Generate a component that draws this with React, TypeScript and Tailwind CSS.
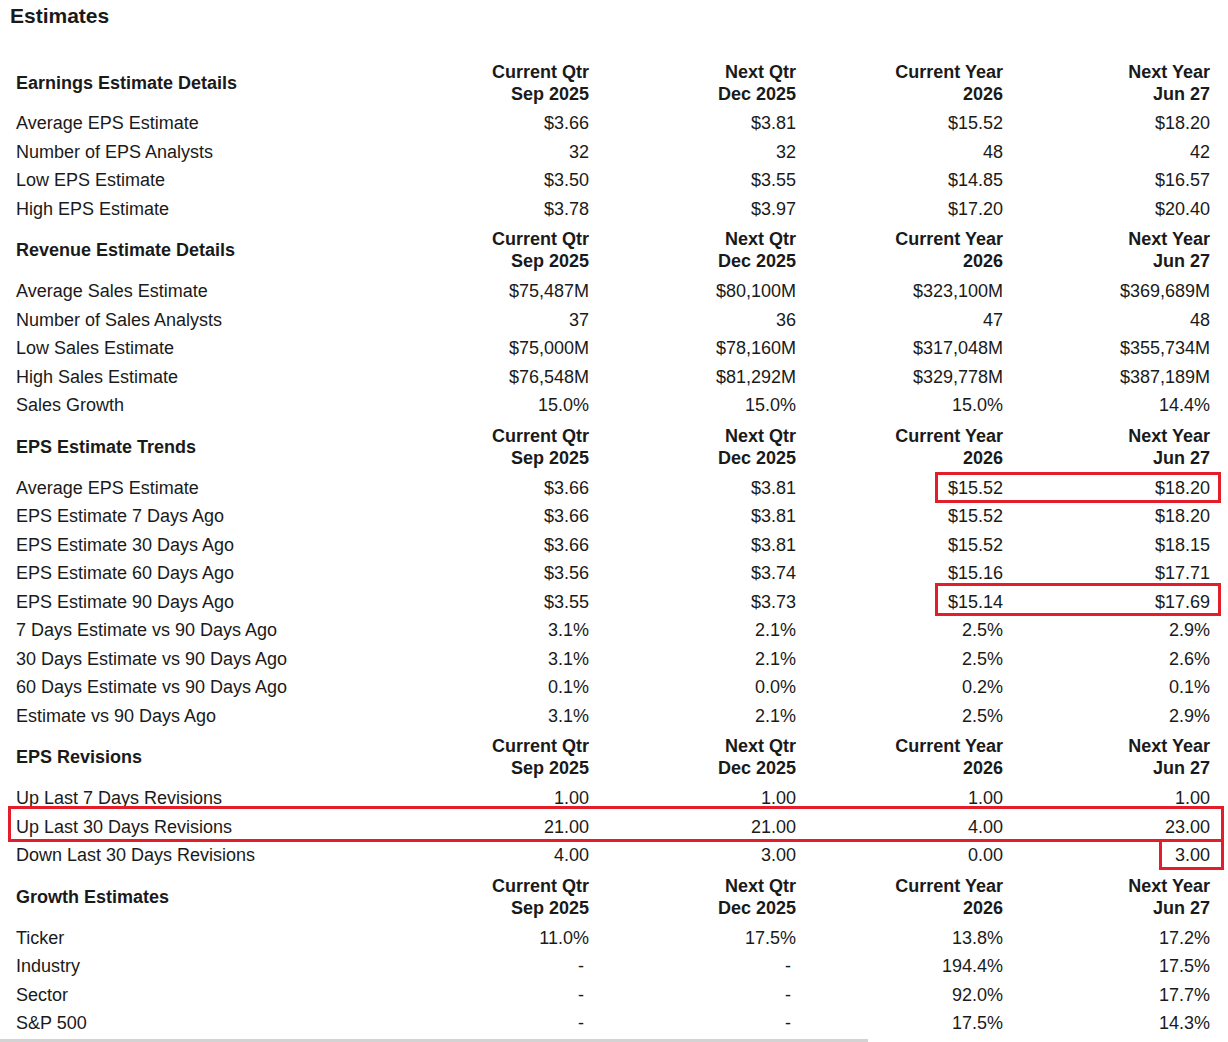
import React from 'react';

type Section = {
  title: string;
  rows: [string, string, string, string, string][];
};

const periods = [
  ['Current Qtr', 'Sep 2025'],
  ['Next Qtr', 'Dec 2025'],
  ['Current Year', '2026'],
  ['Next Year', 'Jun 27'],
];

// empty values show as a dash with a trailing nbsp, as on the source page
const NA = '-\u00a0';

const sections: Section[] = [
  {
    title: 'Earnings Estimate Details',
    rows: [
      ['Average EPS Estimate', '$3.66', '$3.81', '$15.52', '$18.20'],
      ['Number of EPS Analysts', '32', '32', '48', '42'],
      ['Low EPS Estimate', '$3.50', '$3.55', '$14.85', '$16.57'],
      ['High EPS Estimate', '$3.78', '$3.97', '$17.20', '$20.40'],
    ],
  },
  {
    title: 'Revenue Estimate Details',
    rows: [
      ['Average Sales Estimate', '$75,487M', '$80,100M', '$323,100M', '$369,689M'],
      ['Number of Sales Analysts', '37', '36', '47', '48'],
      ['Low Sales Estimate', '$75,000M', '$78,160M', '$317,048M', '$355,734M'],
      ['High Sales Estimate', '$76,548M', '$81,292M', '$329,778M', '$387,189M'],
      ['Sales Growth', '15.0%', '15.0%', '15.0%', '14.4%'],
    ],
  },
  {
    title: 'EPS Estimate Trends',
    rows: [
      ['Average EPS Estimate', '$3.66', '$3.81', '$15.52', '$18.20'],
      ['EPS Estimate 7 Days Ago', '$3.66', '$3.81', '$15.52', '$18.20'],
      ['EPS Estimate 30 Days Ago', '$3.66', '$3.81', '$15.52', '$18.15'],
      ['EPS Estimate 60 Days Ago', '$3.56', '$3.74', '$15.16', '$17.71'],
      ['EPS Estimate 90 Days Ago', '$3.55', '$3.73', '$15.14', '$17.69'],
      ['7 Days Estimate vs 90 Days Ago', '3.1%', '2.1%', '2.5%', '2.9%'],
      ['30 Days Estimate vs 90 Days Ago', '3.1%', '2.1%', '2.5%', '2.6%'],
      ['60 Days Estimate vs 90 Days Ago', '0.1%', '0.0%', '0.2%', '0.1%'],
      ['Estimate vs 90 Days Ago', '3.1%', '2.1%', '2.5%', '2.9%'],
    ],
  },
  {
    title: 'EPS Revisions',
    rows: [
      ['Up Last 7 Days Revisions', '1.00', '1.00', '1.00', '1.00'],
      ['Up Last 30 Days Revisions', '21.00', '21.00', '4.00', '23.00'],
      ['Down Last 30 Days Revisions', '4.00', '3.00', '0.00', '3.00'],
    ],
  },
  {
    title: 'Growth Estimates',
    rows: [
      ['Ticker', '11.0%', '17.5%', '13.8%', '17.2%'],
      ['Industry', NA, NA, '194.4%', '17.5%'],
      ['Sector', NA, NA, '92.0%', '17.7%'],
      ['S&P 500', NA, NA, '17.5%', '14.3%'],
    ],
  },
];

const Highlight = ({ className }: { className: string }) => (
  <div className={`pointer-events-none absolute border-[3px] border-[#e31e2a] ${className}`} />
);

export default function App() {
  return (
    <div
      className="relative w-[1228px] h-[1042px] overflow-hidden bg-white text-[#1a1a1a]"
      style={{ fontFamily: '"Liberation Sans", Arial, sans-serif' }}
    >
      <h1 className="pl-[10px] pt-[3px] text-[21px] leading-[26px] font-bold">Estimates</h1>

      <table className="mt-[29px] ml-[10px] w-[1206px] table-fixed border-collapse text-[18px]">
        <colgroup>
          <col className="w-[378px]" />
          <col className="w-[207px]" />
          <col className="w-[207px]" />
          <col className="w-[207px]" />
          <col className="w-[207px]" />
        </colgroup>
        {sections.map((section, si) => (
          <tbody key={section.title}>
            <tr>
              <th
                className={`pl-[6px] text-left align-middle font-bold leading-[22px] ${
                  si === 0 ? 'pt-[3px] pb-[4px]' : 'pt-[5px] pb-[5px]'
                }`}
              >
                {section.title}
              </th>
              {periods.map(([a, b]) => (
                <th
                  key={a}
                  className={`pr-[6px] text-right font-bold leading-[22px] ${
                    si === 0 ? 'pt-[3px] pb-[4px]' : 'pt-[5px] pb-[5px]'
                  }`}
                >
                  <div>{a}</div>
                  <div>{b}</div>
                </th>
              ))}
            </tr>
            {section.rows.map((row) => (
              <tr key={row[0]} className="h-[28.5px]">
                <td className="pl-[6px] p-0 leading-[20px]">{row[0]}</td>
                {row.slice(1).map((v, i) => (
                  <td key={i} className="pr-[6px] text-right leading-[20px]">
                    {v}
                  </td>
                ))}
              </tr>
            ))}
          </tbody>
        ))}
      </table>

      <div className="mt-[1px] h-[3px] w-[868px] bg-[#d3d3d3]" />

      <Highlight className="left-[935px] top-[472px] w-[286px] h-[31px]" />
      <Highlight className="left-[935px] top-[583px] w-[286px] h-[33px]" />
      <Highlight className="left-[8px] top-[806px] w-[1216px] h-[36px]" />
      <Highlight className="left-[1159px] top-[839px] w-[65px] h-[31px]" />
    </div>
  );
}
